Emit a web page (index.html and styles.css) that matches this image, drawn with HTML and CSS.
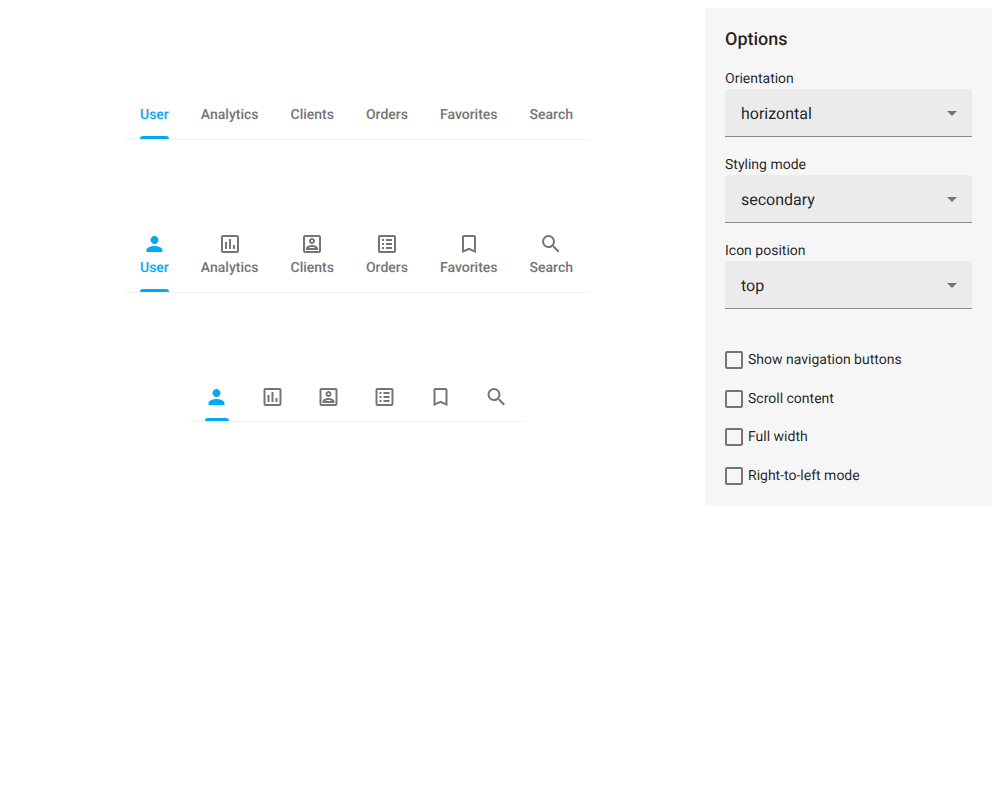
FILE: index.html
```
<!DOCTYPE html>
<html lang="en">
<head>
<meta charset="utf-8">
<title>Tabs</title>
<link rel="stylesheet" href="styles.css">
</head>
<body>
<svg class="sprite" aria-hidden="true">
  <symbol id="user" viewBox="0 0 24 24"><path d="M12 12c2.21 0 4-1.79 4-4s-1.790-4-4-4-4 1.790-4 4 1.790 4 4 4zm0 2c-2.670 0-8 1.340-8 4v2h16v-2c0-2.660-5.330-4-8-4z"/></symbol>
  <symbol id="chart" viewBox="0 0 24 24"><path d="M19 3H5c-1.100 0-2 .9-2 2v14c0 1.100.9 2 2 2h14c1.100 0 2-.9 2-2V5c0-1.100-.9-2-2-2zm0 16H5V5h14v14zM7 10h2v7H7zm4-3h2v10h-2zm4 6h2v4h-2z"/></symbol>
  <symbol id="card" viewBox="0 0 24 24"><path fill-rule="evenodd" d="M19 3H5c-1.100 0-2 .9-2 2v14c0 1.100.9 2 2 2h14c1.100 0 2-.9 2-2V5c0-1.100-.9-2-2-2zm0 16H5V5h14v14zM12 12c1.650 0 3-1.350 3-3s-1.350-3-3-3-3 1.350-3 3 1.350 3 3 3zm0-4c.55 0 1 .45 1 1s-.45 1-1 1-1-.45-1-1 .45-1 1-1zM18 16.580c0-2.500-3.970-3.580-6-3.580s-6 1.080-6 3.580V18h12v-1.420zM8.480 16c.74-.51 2.230-1 3.520-1s2.780.49 3.520 1H8.480z"/></symbol>
  <symbol id="list" viewBox="0 0 24 24"><path d="M19 3H5c-1.100 0-2 .9-2 2v14c0 1.100.9 2 2 2h14c1.100 0 2-.9 2-2V5c0-1.100-.9-2-2-2zm0 16H5V5h14v14zM11 7h6v2h-6zm0 4h6v2h-6zm0 4h6v2h-6zM7 7h2v2H7zm0 4h2v2H7zm0 4h2v2H7z"/></symbol>
  <symbol id="bookmark" viewBox="0 0 24 24"><path d="M17 3H7c-1.100 0-2 .9-2 2v16l7-3 7 3V5c0-1.100-.9-2-2-2zm0 15l-5-2.180L7 18V5h10v13z"/></symbol>
  <symbol id="search" viewBox="0 0 24 24"><path d="M15.500 14h-.79l-.28-.27A6.471 6.471 0 0 0 16 9.500 6.500 6.500 0 1 0 9.500 16c1.610 0 3.090-.59 4.230-1.570l.27.28v.79l5 4.990L20.490 19l-4.990-5zm-6 0C7.010 14 5 11.990 5 9.500S7.010 5 9.500 5 14 7.010 14 9.500 11.990 14 9.500 14z"/></symbol>
</svg>
<div class="demo">
  <main class="widgets">
    <nav class="tabs tabs-text">
      <div class="tab selected"><span>User</span></div>
      <div class="tab"><span>Analytics</span></div>
      <div class="tab"><span>Clients</span></div>
      <div class="tab"><span>Orders</span></div>
      <div class="tab"><span>Favorites</span></div>
      <div class="tab"><span>Search</span></div>
    </nav>
    <nav class="tabs tabs-both">
      <div class="tab selected"><svg class="icon"><use href="#user"/></svg><span>User</span></div>
      <div class="tab"><svg class="icon"><use href="#chart"/></svg><span>Analytics</span></div>
      <div class="tab"><svg class="icon"><use href="#card"/></svg><span>Clients</span></div>
      <div class="tab"><svg class="icon"><use href="#list"/></svg><span>Orders</span></div>
      <div class="tab"><svg class="icon"><use href="#bookmark"/></svg><span>Favorites</span></div>
      <div class="tab"><svg class="icon"><use href="#search"/></svg><span>Search</span></div>
    </nav>
    <nav class="tabs tabs-icons">
      <div class="tab selected"><svg class="icon"><use href="#user"/></svg></div>
      <div class="tab"><svg class="icon"><use href="#chart"/></svg></div>
      <div class="tab"><svg class="icon"><use href="#card"/></svg></div>
      <div class="tab"><svg class="icon"><use href="#list"/></svg></div>
      <div class="tab"><svg class="icon"><use href="#bookmark"/></svg></div>
      <div class="tab"><svg class="icon"><use href="#search"/></svg></div>
    </nav>
  </main>
  <aside class="options">
    <h2 class="caption">Options</h2>
    <div class="option">
      <div class="label">Orientation</div>
      <div class="select"><span>horizontal</span><i class="arrow"></i></div>
    </div>
    <div class="option">
      <div class="label">Styling mode</div>
      <div class="select"><span>secondary</span><i class="arrow"></i></div>
    </div>
    <div class="option">
      <div class="label">Icon position</div>
      <div class="select"><span>top</span><i class="arrow"></i></div>
    </div>
    <div class="checks">
      <div class="check"><i class="box"></i><span>Show navigation buttons</span></div>
      <div class="check"><i class="box"></i><span>Scroll content</span></div>
      <div class="check"><i class="box"></i><span>Full width</span></div>
      <div class="check"><i class="box"></i><span>Right-to-left mode</span></div>
    </div>
  </aside>
</div>
</body>
</html>
```
FILE: styles.css
```
* { box-sizing: border-box; }
body {
  margin: 8px;
  background: #fff;
  color: rgba(0, 0, 0, 0.87);
  font-family: Roboto, "Liberation Sans", sans-serif;
  font-size: 14px;
  text-rendering: geometricPrecision;
}
.sprite { display: none; }
.demo { display: flex; align-items: flex-start; }
.widgets {
  flex: 1;
  display: flex;
  flex-direction: column;
  align-items: center;
  padding-top: 82px;
}
.tabs {
  display: flex;
  border-bottom: 1px solid #f2f2f2;
}
.tab {
  position: relative;
  display: flex;
  flex-direction: column;
  align-items: center;
  padding: 0 16px;
  color: #757575;
  font-weight: 500;
  line-height: 18px;
}
.tab.selected { color: #03a9f4; }
.tab.selected::after {
  content: "";
  position: absolute;
  left: 16px;
  right: 16px;
  bottom: 0;
  height: 3px;
  border-radius: 3px 3px 0 0;
  background: #03a9f4;
}
.tabs-text { height: 50px; margin-bottom: 80px; }
.tabs-text .tab { padding-top: 16px; }
.tabs-both { height: 73px; margin-bottom: 80px; }
.tabs-both .tab { padding-top: 12px; gap: 3px; }
.tabs-both .selected use { transform: translateX(0.5px); }
.tabs-icons { height: 49px; }
.tabs-icons .tab { padding-top: 12px; }
.tabs-icons use { transform: translateX(-0.5px); }
.icon { display: block; width: 24px; height: 24px; fill: currentColor; }

.options {
  width: 287px;
  height: 498px;
  padding: 21px 20px 20px;
  background: #f6f6f6;
}
.caption { margin: 0 0 19px; font-size: 18px; font-weight: 500; line-height: 22px; }
.option { margin-bottom: 19px; }
.label { line-height: 18px; margin-bottom: 1px; }
.select {
  display: flex;
  align-items: center;
  justify-content: space-between;
  height: 48px;
  padding: 1px 15px 0 16px;
  border-bottom: 1px solid #888;
  border-radius: 4px 4px 0 0;
  background: #ebebeb;
  font-size: 16px;
}
.arrow {
  border: 5px solid transparent;
  border-top-color: #757575;
  border-bottom: 0;
}
.checks { display: flex; flex-direction: column; gap: 20.5px; padding-top: 23px; }
.check { display: flex; align-items: center; gap: 5px; height: 18px; }
.box { width: 18px; height: 18px; border: 2px solid #757575; border-radius: 2px; }
```
